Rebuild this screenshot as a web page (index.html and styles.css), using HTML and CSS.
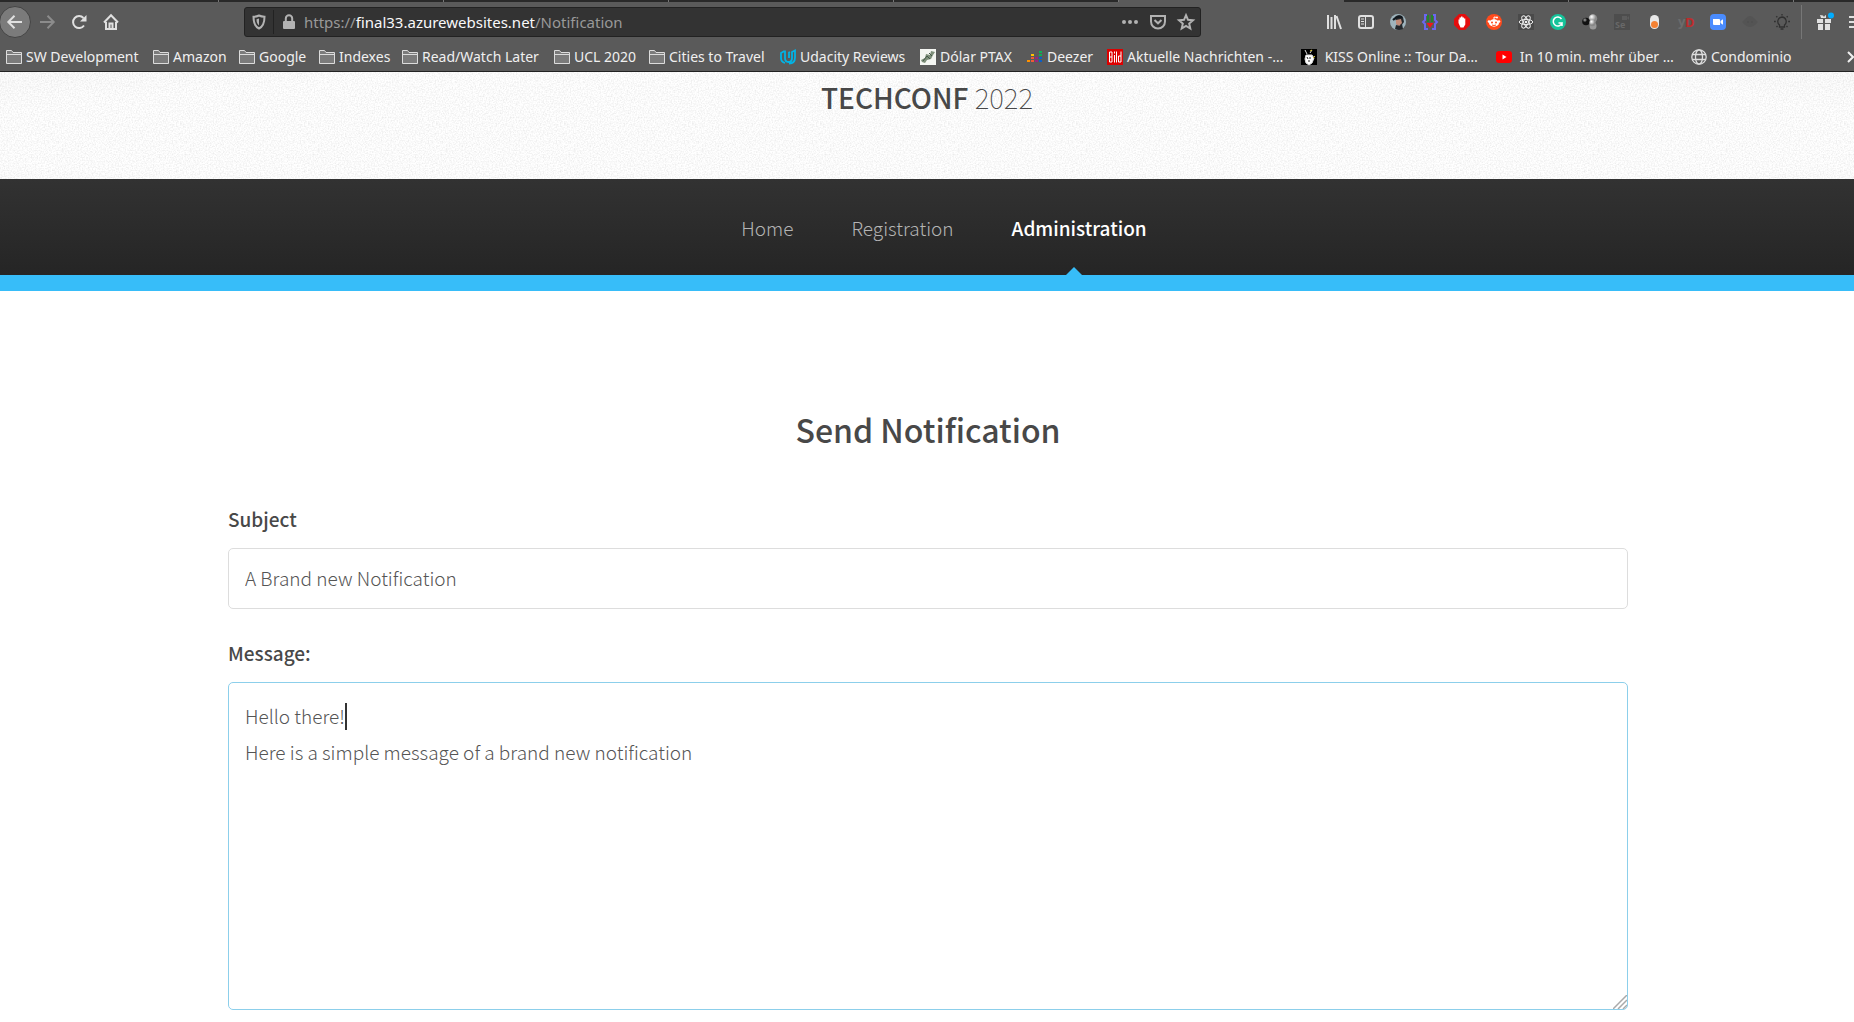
FILE: index.html
```
<!DOCTYPE html>
<html lang="en">
<head>
<meta charset="utf-8">
<title>TechConf 2022 - Send Notification</title>
<link rel="stylesheet" href="styles.css">
</head>
<body>
<svg class="defs" aria-hidden="true">
  <symbol id="folder" viewBox="0 0 16 16"><path d="M.5 14.500v-13h5l1.500 2h8.500v11z" fill="#7b7b7b" stroke="#dcdcdc"/><path d="M.5 5.500h15" stroke="#dcdcdc"/></symbol>
</svg>

<div class="browser">
  <div class="tabs"><i></i><i></i><i></i><i></i><i></i><i class="active"></i><i></i><i></i><i></i></div>
  <div class="toolbar">
    <div class="group nav-buttons">
      <button class="tool back" aria-label="Back"><svg viewBox="0 0 16 16"><path d="M15 8H1.500M7.500 1.800 1.300 8l6.200 6.200" class="line"/></svg></button>
      <button class="tool dim" aria-label="Forward"><svg viewBox="0 0 16 16"><path d="M1 8h13.500M8.500 1.800 14.700 8l-6.200 6.200" class="line"/></svg></button>
      <button class="tool" aria-label="Reload"><svg viewBox="0 0 16 16"><path d="M13 11.500A6 6 0 1 1 12.500 4" class="line"/><path d="M15.500 1v6.500H9z" fill="currentColor"/></svg></button>
      <button class="tool" aria-label="Home"><svg viewBox="0 0 16 16"><path d="M1 8.500 8 1.300l7 7.200M3 8v7h10V8" class="line"/><path d="M6.500 15V9.500h3V15" class="line"/></svg></button>
    </div>
    <div class="urlbar">
      <button class="small" aria-label="Tracking protection"><svg viewBox="0 0 16 16"><path d="M8 1.500c2 1 4 1.200 5.500 1.200 0 5-.5 9.300-5.500 11.800-5-2.500-5.500-6.800-5.500-11.800C4 2.700 6 2.500 8 1.500z" class="line"/><path d="M8 4.500v7C5.800 9.500 5.500 7.500 5.500 5.200z" fill="currentColor"/></svg></button>
      <button class="small lock" aria-label="Site information"><svg viewBox="0 0 16 16"><rect x="2" y="7" width="12" height="8" rx="1" fill="currentColor"/><path d="M4.800 7V4.500a3.200 3.200 0 0 1 6.400 0V7" class="line"/></svg></button>
      <div class="address">https://<span>final33.azurewebsites.net</span>/Notification</div>
      <button class="small" aria-label="Page actions"><svg viewBox="0 0 16 16" fill="currentColor"><circle cx="2" cy="8" r="2"/><circle cx="8" cy="8" r="2"/><circle cx="14" cy="8" r="2"/></svg></button>
      <button class="small" aria-label="Save to Pocket"><svg viewBox="0 0 16 16"><path d="M1 2h14v5.500a7 7 0 0 1-14 0zM4.500 6 8 9.300 11.500 6" class="line"/></svg></button>
      <button class="small" aria-label="Bookmark this page"><svg viewBox="0 0 16 16"><path d="m8 1.200 2 4.600 5 .5-3.800 3.300 1.100 4.900L8 12l-4.300 2.500 1.100-4.900L1 6.300l5-.5z" class="line"/></svg></button>
    </div>
    <div class="group extensions">
      <button class="tool" aria-label="Library"><svg viewBox="0 0 16 16"><path d="M2 1v14M5.500 3v12M9 1v14M10.500 2l4.500 13" class="line"/></svg></button>
      <button class="tool" aria-label="Sidebars"><svg viewBox="0 0 16 16"><rect x="1" y="2" width="14" height="12" rx="2" class="line"/><path d="M7.500 2v12" class="line thin"/><path d="M3 5h3M3 7.500h3M3 10h3" class="line thin"/></svg></button>
      <button class="tool" aria-label="Profile"><svg viewBox="0 0 16 16"><circle cx="8" cy="8" r="8" fill="#9fb4bd"/><path d="M5 3q4-4 8 0l1 5-3 4-4-1z" fill="#24282c"/><path d="M6 6l5-1 1 4-3 3-3-2z" fill="#c18c79"/><path d="M6 11l4 1 2-2 1 5q-4 2-8 0z" fill="#24282c"/><path d="M3 6q4-4 9-3" stroke="#10161c" stroke-width="2" fill="none"/></svg></button>
      <button class="tool" aria-label="Code companion"><svg viewBox="0 0 16 16"><path d="M5 1H3v5L1 8l2 2v5h3M11 1h2v5l2 2-2 2v5h-3" fill="none" stroke="#6a67f0" stroke-width="2"/><path d="M5 1h2v7H5zM9 1h2v7H9z" fill="#23862c"/><path d="M4.500 9h7L8 14z" fill="#f01818"/></svg></button>
      <button class="tool" aria-label="Ad blocker"><svg viewBox="0 0 16 16"><path d="M5 0h6l5 5v6l-5 5H5l-5-5V5z" fill="#e40d0d"/><path d="M4.500 9V5.500h1V3.500h1.500v-1h1.500v1H10v1h1.300v6L9.500 13.500h-3z" fill="#fff"/></svg></button>
      <button class="tool" aria-label="Reddit"><svg viewBox="0 0 16 16"><circle cx="8" cy="8" r="8" fill="#ff4a1c"/><ellipse cx="8" cy="9" rx="5" ry="3.700" fill="#fff"/><circle cx="3" cy="7.500" r="1.300" fill="#fff"/><circle cx="13" cy="7.500" r="1.300" fill="#fff"/><path d="M8 6V3l3 .5" stroke="#fff" fill="none"/><circle cx="11" cy="3.500" r="1" fill="#fff"/><circle cx="6" cy="8.500" r="1" fill="#ff4a1c"/><circle cx="10" cy="8.500" r="1" fill="#ff4a1c"/><path d="M6 11q2 1 4 0" stroke="#ff4a1c" fill="none"/></svg></button>
      <button class="tool" aria-label="React tools"><svg viewBox="0 0 16 16"><path d="M0 0h16v16H0z" fill="#4a4a4a"/><g fill="none" stroke="#eee"><ellipse cx="8" cy="8" rx="6.800" ry="2.600"/><ellipse cx="8" cy="8" rx="6.800" ry="2.600" transform="rotate(60 8 8)"/><ellipse cx="8" cy="8" rx="6.800" ry="2.600" transform="rotate(120 8 8)"/></g><circle cx="8" cy="8" r="1.300" fill="#eee"/></svg></button>
      <button class="tool" aria-label="Grammar check"><svg viewBox="0 0 16 16"><circle cx="8" cy="8" r="8" fill="#15c39a"/><path d="M11.500 5A4.500 4.500 0 1 0 12 9H8.500M12 9v3" fill="none" stroke="#fff" stroke-width="1.500"/></svg></button>
      <button class="tool" aria-label="Molecules"><svg viewBox="0 0 16 16"><defs><radialGradient id="ball" cx=".35" cy=".3"><stop offset="0" stop-color="#fff"/><stop offset="1" stop-color="#888"/></radialGradient><radialGradient id="dark" cx=".35" cy=".3"><stop offset="0" stop-color="#aaa"/><stop offset=".6" stop-color="#111"/></radialGradient></defs><circle cx="11" cy="12" r="3.500" fill="#999"/><circle cx="11" cy="4.500" r="4.200" fill="url(#ball)"/><circle cx="4" cy="7.500" r="3.800" fill="url(#dark)"/><circle cx="10.500" cy="9" r="3.200" fill="url(#ball)"/></svg></button>
      <button class="tool" aria-label="Selenium"><svg viewBox="0 0 16 16"><path d="M0 0h16v16H0z" fill="#4d4d4d"/><path d="M8 2h5v4H8zM13 4l2-2v4z" fill="#5c5c5c"/><text x="1" y="14" class="glyph" fill="#686868">Se</text></svg></button>
      <button class="tool" aria-label="Toggle"><svg viewBox="0 0 16 16"><rect x="4" y="1" width="9" height="14" rx="4.500" fill="#e8e8e8"/><circle cx="8.500" cy="10.500" r="3.500" fill="#f58233"/></svg></button>
      <button class="tool" aria-label="yD"><svg viewBox="0 0 16 16"><text x="0" y="12" class="glyph big" fill="#6c6c6c">y</text><text x="7" y="13" class="glyph big" fill="#bd2c2c">D</text></svg></button>
      <button class="tool" aria-label="Zoom"><svg viewBox="0 0 16 16"><rect width="16" height="16" rx="4" fill="#4a8cff"/><path d="M3 5h6q1 0 1 1v5H4q-1 0-1-1zM10.500 7 13 5.300v5.400L10.500 9z" fill="#fff"/></svg></button>
      <button class="tool" aria-label="Assistant"><svg viewBox="0 0 16 16"><path d="M3 5q5-6 10 0l3 3-3 3q-5 4-10 0L0 8z" fill="#545454"/><path d="M5 8h2M9 8h2" stroke="#4c4c4c"/></svg></button>
      <button class="tool" aria-label="Light"><svg viewBox="0 0 16 16" fill="none" stroke="#303030" stroke-width="1.300"><path d="M8 3a4.500 4.500 0 0 0-2.500 8v2h5v-2A4.500 4.500 0 0 0 8 3zM6.500 15h3M8 0v1.500M2.300 2.300l1 1M13.700 2.300l-1 1M0 7.500h1.800M14.200 7.500H16M2.500 13l1-1M13.500 13l-1-1"/></svg></button>
      <span class="divider"></span>
      <button class="tool" aria-label="What's new"><svg viewBox="0 0 16 16" fill="currentColor"><path d="M1 5h6v4H1zM9 5h6v4H9zM2 10h5v6H2zM9 10h5v6H9zM4 1l3 .5L8 3l1-1.500 1-.5v3H5z"/><circle cx="15" cy="1.500" r="3" fill="#00adff"/></svg></button>
      <button class="tool" aria-label="Menu"><svg viewBox="0 0 16 16"><path d="M1 3h14M1 8h14M1 13h14" class="line"/></svg></button>
    </div>
  </div>
  <nav class="bookmarks" aria-label="Bookmarks">
    <a href="#"><svg><use href="#folder"/></svg>SW Development</a>
    <a href="#"><svg><use href="#folder"/></svg>Amazon</a>
    <a href="#"><svg><use href="#folder"/></svg>Google</a>
    <a href="#"><svg><use href="#folder"/></svg>Indexes</a>
    <a href="#"><svg><use href="#folder"/></svg>Read/Watch Later</a>
    <a href="#"><svg><use href="#folder"/></svg>UCL 2020</a>
    <a href="#"><svg><use href="#folder"/></svg>Cities to Travel</a>
    <a href="#"><svg viewBox="0 0 16 16"><path d="M4.500 2 1 4v5q0 4 4 5M5 1.500V9q0 4 3.500 4T12 9M10 3l-1 .5V9M9 14.500q6 0 6-6V1.500l-3 1.500v6" fill="none" stroke="#02b3e4" stroke-width="1.800"/></svg>Udacity Reviews</a>
    <a href="#"><svg viewBox="0 0 16 16"><path d="M0 0h16v16H0z" fill="#f4f6f2"/><path d="m1 11 4-2 1-4 4 1 1-4 4 1-2 3-2 4-4 1-2 3-3-1z" fill="#7e8f7a"/><path d="m3 12 4-5 3 3M9 4l3 3" stroke="#435848" fill="none"/></svg>Dólar PTAX</a>
    <a href="#"><svg viewBox="0 0 16 16"><path d="M0 11h3v2H0z" fill="#ff9100"/><path d="M4 5h3v2H4z" fill="#ffc400"/><path d="M4 8h3v2H4zM4 11h3v2H4z" fill="#ee5a35"/><path d="M8 8h3v2H8zM8 11h3v2H8z" fill="#97267f"/><path d="M12 2h3v2h-3zM12 5h3v2h-3z" fill="#0daf56"/><path d="M12 8h3v2h-3zM12 11h3v2h-3z" fill="#0c5fc5"/></svg>Deezer</a>
    <a href="#"><svg viewBox="0 0 16 16"><path d="M0 0h16v16H0z" fill="#d00"/><path d="M2.500 3v10h2.500V3zM2.500 8H5M7.500 6v7.500M7.500 2.500v2M9.500 2.500v11M14 2.500V13h-2.500V7H14" fill="none" stroke="#fff"/></svg>Aktuelle Nachrichten -…</a>
    <a href="#"><svg viewBox="0 0 16 16"><path d="M0 0h16v16H0z" fill="#000"/><path d="M5 6h6l2 3-2 5-3 2-3-2-1-4zM4 1l2 4M11 1 9 4" fill="#fff" stroke="#ddd"/><path d="M6 8l1 2M9 8v2M7 12h2" stroke="#222"/><path d="M9 2l2-1M12 9l2-2" stroke="#d8c42c"/></svg>&nbsp;KISS Online :: Tour Da…</a>
    <a href="#"><svg viewBox="0 0 16 16"><rect y="2" width="16" height="12" rx="3" fill="red"/><path d="m6.500 5.500 4 2.500-4 2.500z" fill="#fff"/></svg>&nbsp;In 10 min. mehr über …</a>
    <a href="#"><svg viewBox="0 0 16 16" fill="none" stroke="#ddd" stroke-width="1.300"><circle cx="8" cy="8" r="7.200"/><ellipse cx="8" cy="8" rx="3.500" ry="7.200"/><path d="M1.500 5.500h13M1.500 10.500h13"/></svg>Condominio</a>
    <button class="more" aria-label="More bookmarks"><svg viewBox="0 0 16 16"><path d="m2 3 5 5-5 5" class="line"/></svg></button>
  </nav>
</div>

<header class="site-header"><h1>TECHCONF <span>2022</span></h1></header>
<nav class="site-nav">
  <ul>
    <li><a href="#">Home</a></li>
    <li><a href="#">Registration</a></li>
    <li class="current"><a href="#">Administration</a></li>
  </ul>
</nav>

<main>
  <h2>Send Notification</h2>
  <form>
    <label for="subject">Subject</label>
    <input id="subject" type="text" value="A Brand new Notification">
    <label for="message">Message:</label>
    <div class="message">
      <textarea id="message">Hello there!
Here is a simple message of a brand new notification</textarea>
      <span class="caret"></span>
      <svg class="grip" viewBox="0 0 14 14"><path d="M0 14 14 0M5 14l9-9M10 14l4-4" stroke="#aaa" stroke-width="1.500"/></svg>
    </div>
  </form>
</main>
</body>
</html>
```
FILE: styles.css
```
* { box-sizing: border-box; }
body {
  margin: 0;
  background: #fff;
  color: #484848;
  font-family: "Noto Sans CJK SC", sans-serif;
  font-size: 19px;
  font-weight: 300;
}
button { border: 0; padding: 0; background: none; color: inherit; }
a { color: inherit; text-decoration: none; }
svg { display: block; flex: none; width: 16px; height: 16px; overflow: visible; }
.defs { position: absolute; width: 0; height: 0; }
.line { fill: none; stroke: currentColor; stroke-width: 2; }
.line.thin { stroke-width: 1; }
.glyph { font: 700 9px "Noto Sans", sans-serif; }
.glyph.big { font-size: 13px; }

/* Browser frame */
.browser {
  overflow: hidden;
  border-bottom: 1px solid #222;
  background: #5a5a5a;
  color: #e0e0e0;
  font: 400 14px "Noto Sans", sans-serif;
}
.tabs { display: flex; height: 2px; margin-left: -6px; }
.tabs i { flex: none; width: 225px; background: #292929; border-right: 1px solid #777; }
.tabs i.active { background: none; border: 0; }
.toolbar { display: flex; align-items: center; height: 40px; }
.group { display: flex; align-items: center; flex: none; }
.nav-buttons { width: 244px; margin-left: -1px; margin-right: 1px; }
.tool { display: flex; flex: none; align-items: center; justify-content: center; width: 32px; height: 32px; }
.back { border: 1px solid #444; border-radius: 50%; background: #7b7b7b; }
.dim { color: #8c8c8c; }
.urlbar {
  display: flex;
  flex: 1;
  align-items: center;
  height: 30px;
  border: 1px solid #222;
  border-radius: 3px;
  background: #333;
  color: #b2b2b2;
}
.small { display: flex; align-items: center; justify-content: center; width: 28px; height: 24px; }
.lock { width: 31px; border-left: 1px solid #222; }
.address { flex: 1; color: #999; font-size: 15px; }
.address span { color: #f9f9fa; }
.extensions { width: 536px; margin-left: 117px; }
.divider { flex: none; width: 1px; height: 34px; margin: 0 6px 0 3px; background: #777; }

.bookmarks {
  display: grid;
  grid-template-columns: 147px 86px 80px 83px 152px 95px 131px 140px 107px 80px 194px 195px 195px 155px 8px;
  align-items: center;
  height: 29px;
  padding-left: 6px;
  color: #f0f0f0;
}
.bookmarks a { display: flex; align-items: center; gap: 4px; white-space: nowrap; }

/* Site header and navigation */
.site-header, .site-nav { text-align: center; }
.site-header {
  height: 107px;
  background:
    url("data:image/svg+xml,%3Csvg xmlns='http://www.w3.org/2000/svg' width='128' height='128'%3E%3Cfilter id='n' x='0' y='0' width='1' height='1'%3E%3CfeTurbulence type='fractalNoise' baseFrequency='.7' numOctaves='2' stitchTiles='stitch'/%3E%3CfeColorMatrix values='0 0 0 0 0 0 0 0 0 0 0 0 0 0 0 0 0 0 .16 -.06'/%3E%3C/filter%3E%3Crect width='128' height='128' filter='url(%23n)'/%3E%3C/svg%3E"),
    radial-gradient(ellipse 75% 90% at 50% 60%, #fff 70%, #fafafa 100%);
}
h1 { margin: 0; font-size: 28px; font-weight: 500; line-height: 50px; }
h1 span { font-weight: 100; }
.site-nav {
  height: 112px;
  border-bottom: 16px solid #37bdf9;
  background: linear-gradient(#323232, #252525);
}
.site-nav ul { display: flex; justify-content: center; margin: 0; padding: 0 0 0 24px; list-style: none; }
.site-nav li { position: relative; padding: 0 24px 0 34px; color: #b4b4b4; line-height: 98px; height: 96px; }
.site-nav .current { color: #fff; font-weight: 500; }
.current::after {
  content: "";
  position: absolute;
  left: 50%;
  bottom: 0;
  margin-left: -8px;
  border: solid transparent;
  border-width: 0 8px 8px;
  border-bottom-color: #37bdf9;
}

/* Notification form */
main { max-width: 1432px; margin: 0 auto; padding: 108px 15px 12px 17px; }
h2 { margin: 0; text-align: center; font-size: 32px; font-weight: 500; line-height: 60px; }
form { padding-top: 40px; }
label { display: block; padding: 2px 0 11px; font-weight: 500; line-height: 36px; }
input, textarea {
  display: block;
  width: 100%;
  border: 1px solid #ddd;
  border-radius: 5px;
  background: #fff;
  color: #555;
  font: 300 19px/36px "Noto Sans CJK SC", sans-serif;
  outline: 0;
}
input { height: 61px; margin-bottom: 24px; padding: 0 16px 2px; }
textarea { height: 328px; padding: 15px 16px; border-color: #8ccfeb; resize: none; }
.message { position: relative; }
.caret { position: absolute; left: 117px; top: 21px; width: 2px; height: 27px; background: #333; }
.grip { position: absolute; right: 1px; bottom: 1px; width: 14px; height: 14px; overflow: hidden; }
```
